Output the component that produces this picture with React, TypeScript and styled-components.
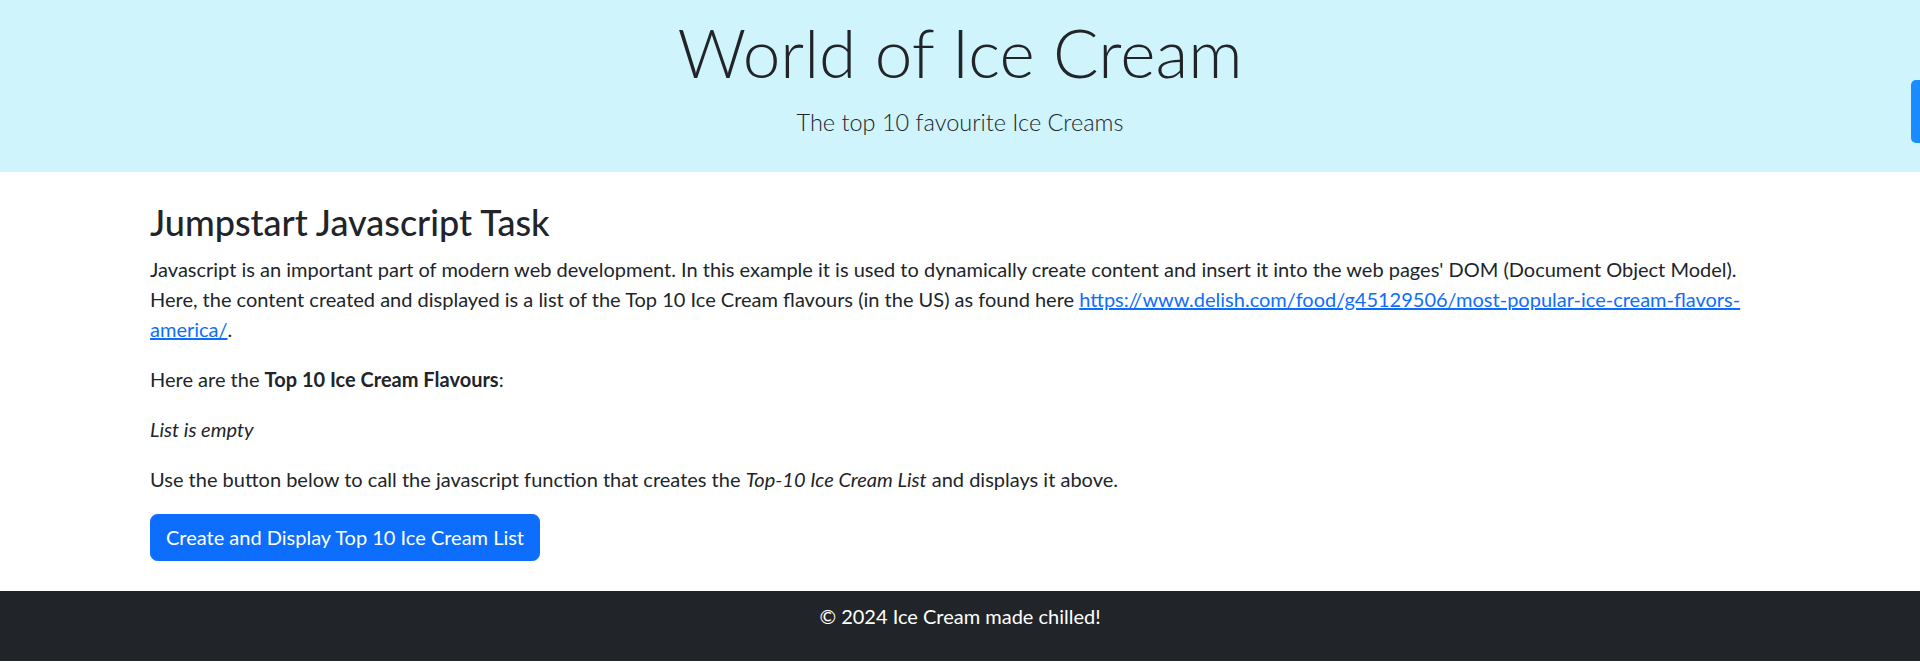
import styled, { createGlobalStyle } from "styled-components";

const GlobalStyle = createGlobalStyle`
  *, *::before, *::after {
    box-sizing: border-box;
  }
  body {
    margin: 0;
    font-family: "Segoe UI", Lato, "Liberation Sans", sans-serif;
    font-size: 20px;
    line-height: 1.5;
    color: #212529;
    background-color: #fff;
  }
`;

export default function App() {
  return (
    <>
      <GlobalStyle />
      <Header>
        <Title>World of Ice Cream</Title>
        <Lead>The top 10 favourite Ice Creams</Lead>
      </Header>
      <Main>
        <Heading>Jumpstart Javascript Task</Heading>
        <Text>
          Javascript is an important part of modern web development. In this
          example it is used to dynamically create content and insert it into
          the web pages' DOM (Document Object Model). Here, the content created
          and displayed is a list of the Top 10 Ice Cream flavours (in the US)
          as found here{" "}
          <Link href="#">
            https://www.delish.com/food/g45129506/most-popular-ice-cream-flavors-america/
          </Link>
          .
        </Text>
        <Text>
          Here are the <strong>Top 10 Ice Cream Flavours</strong>:
        </Text>
        <Text>
          <em>List is empty</em>
        </Text>
        <Text>
          Use the button below to call the javascript function that creates the{" "}
          <em>Top-10 Ice Cream List</em> and displays it above.
        </Text>
        <PrimaryButton type="button">
          Create and Display Top 10 Ice Cream List
        </PrimaryButton>
      </Main>
      <Footer>
        <FooterText>© 2024 Ice Cream made chilled!</FooterText>
      </Footer>
      <SideTab />
    </>
  );
}

const Header = styled.header`
  background-color: #cff4fc;
  text-align: center;
  padding: 10px 0;
`;

const Title = styled.h1`
  margin: 0 0 10px;
  font-size: 67.5px;
  font-weight: 300;
  line-height: 84px;
`;

const Lead = styled.p`
  margin: 0 0 20px;
  font-size: 23.5px;
  font-weight: 300;
  line-height: 37.5px;
`;

const Main = styled.main`
  max-width: 1650px;
  margin: 0 auto;
  padding: 26px 15px 30px;
`;

const Heading = styled.h2`
  margin: 0 0 8px;
  font-size: 36px;
  font-weight: 500;
  line-height: 48px;
`;

const Text = styled.p`
  margin: 0 0 20px;
`;

const Link = styled.a`
  color: #0d6efd;
  text-decoration: underline;
`;

const PrimaryButton = styled.button`
  display: inline-block;
  padding: 7.5px 15px;
  font-family: inherit;
  font-size: 20px;
  line-height: 30px;
  color: #fff;
  background-color: #0d6efd;
  border: 1.25px solid #0d6efd;
  border-radius: 7.5px;
  cursor: pointer;
`;

const Footer = styled.footer`
  background-color: #212529;
  color: #fff;
  text-align: center;
  padding: 10px 0;
`;

const FooterText = styled.p`
  margin: 0 0 20px;
`;

const SideTab = styled.div`
  position: fixed;
  top: 80px;
  right: 0;
  width: 9px;
  height: 63px;
  background-color: #1a8cff;
  border-radius: 5px 0 0 5px;
`;
